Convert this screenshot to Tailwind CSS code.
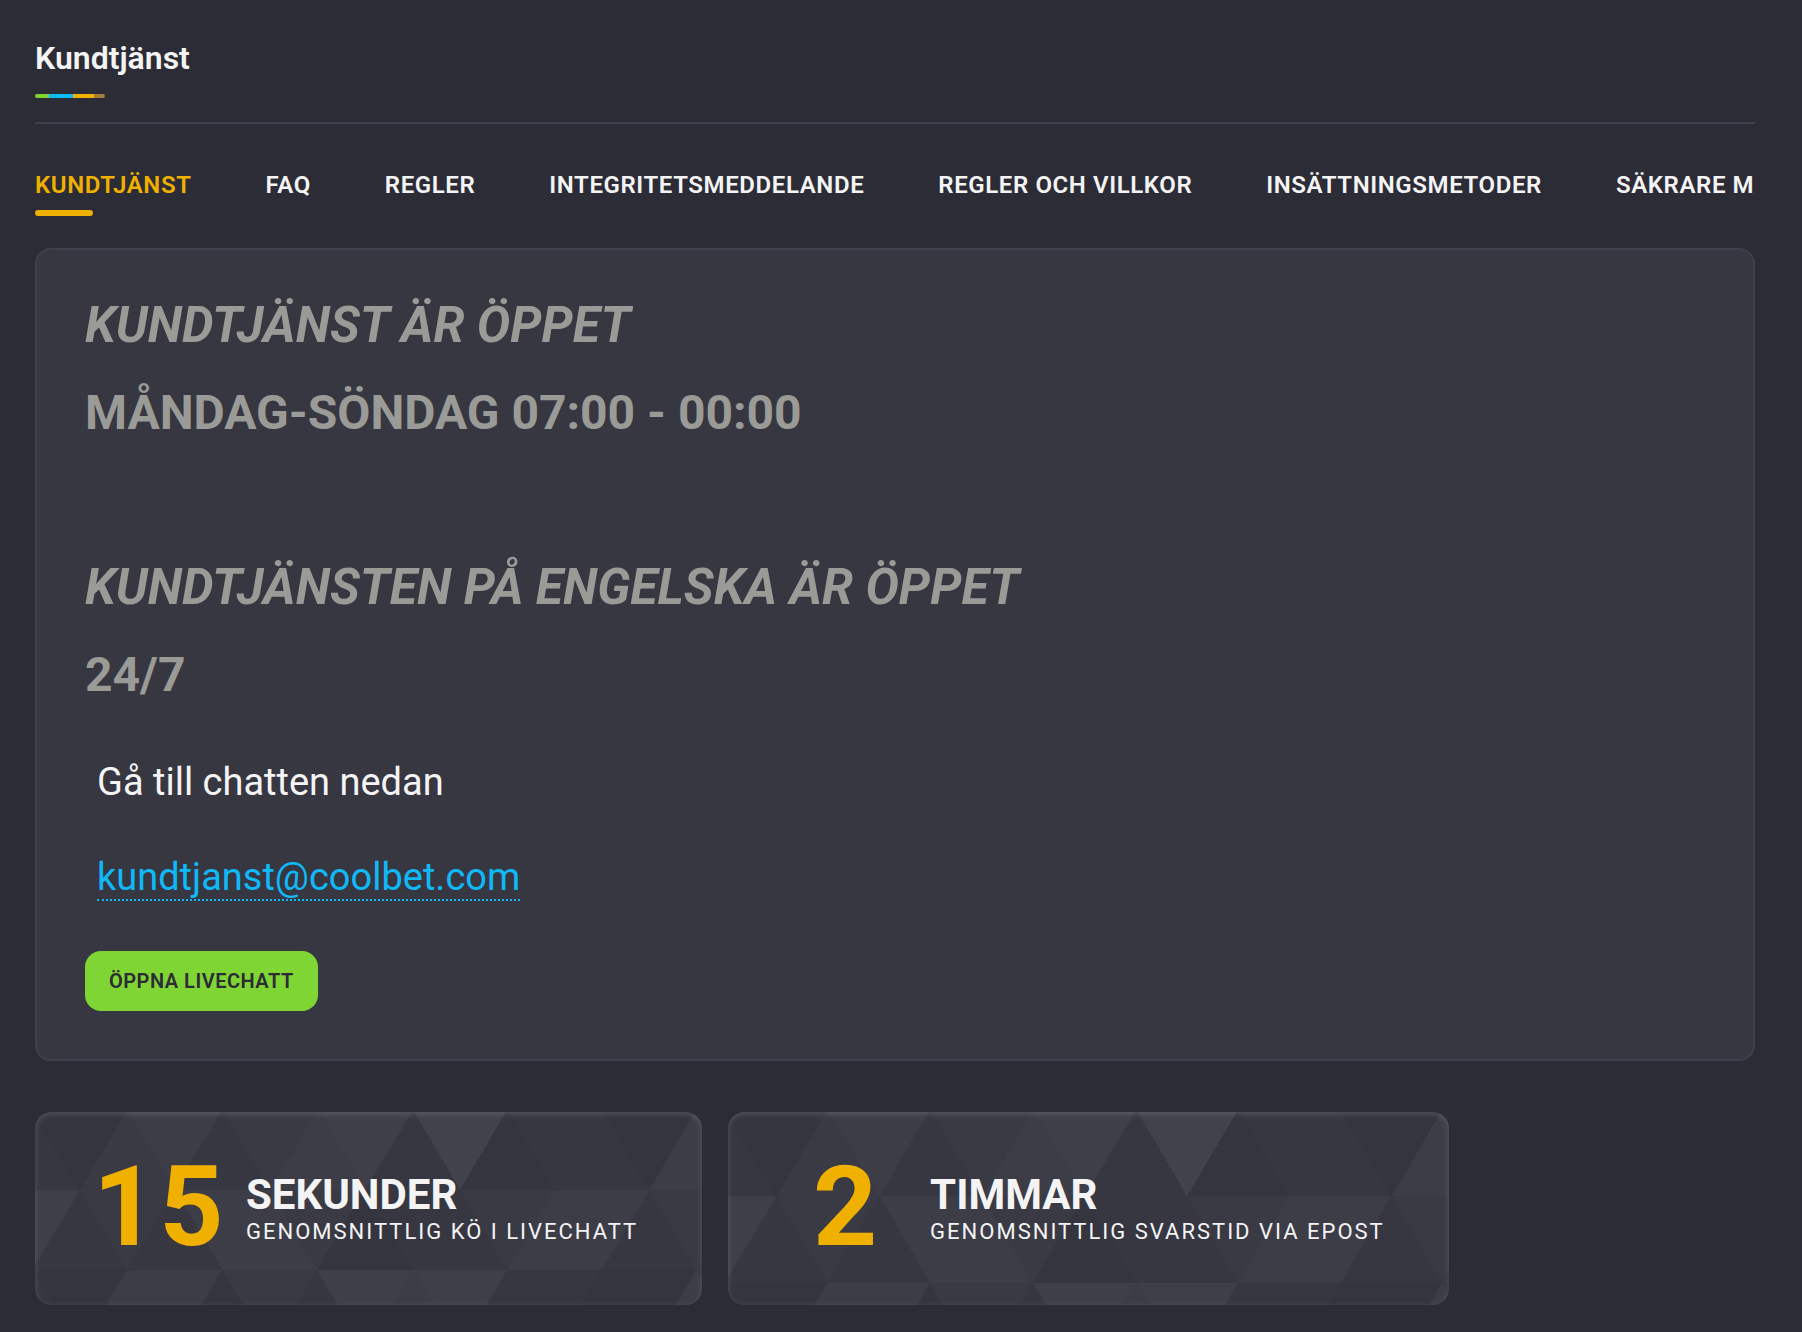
<!DOCTYPE html>
<html lang="sv">
<head>
  <meta charset="UTF-8" />
  <meta name="viewport" content="width=device-width, initial-scale=1.0" />
  <title>Kundtjänst</title>
  <script src="https://cdn.jsdelivr.net/npm/@tailwindcss/browser@4"></script>
</head>
<body class="min-h-screen bg-[#2c2c36] text-[#f4f4f5] font-['Roboto',sans-serif]">
  <div class="pl-[35px] pr-[47px] pt-9">

    <!-- Header -->
    <header class="border-b-2 border-[#40404c] pb-6">
      <h1 class="text-[32px] leading-11 font-semibold">Kundtjänst</h1>
      <div class="mt-[14px] flex h-1 w-[70px] overflow-hidden rounded-full">
        <span class="w-[14px] bg-[#7ed533]"></span>
        <span class="w-6 bg-[#0fb9f7]"></span>
        <span class="w-[21px] bg-[#f0b000]"></span>
        <span class="w-[11px] bg-[#a4803c]"></span>
      </div>
    </header>

    <!-- Tabs -->
    <nav class="mt-[45px] flex gap-[74px] overflow-hidden whitespace-nowrap text-2xl leading-8 font-semibold tracking-wide">
      <a href="#" class="text-[#f0b000]">KUNDTJÄNST<span class="mt-[9px] block h-[6px] w-[58px] rounded-full bg-[#f0b000]"></span></a>
      <a href="#">FAQ</a>
      <a href="#">REGLER</a>
      <a href="#">INTEGRITETSMEDDELANDE</a>
      <a href="#">REGLER OCH VILLKOR</a>
      <a href="#">INSÄTTNINGSMETODER</a>
      <a href="#">SÄKRARE M</a>
    </nav>

    <!-- Contact -->
    <main class="mt-8 rounded-2xl border-2 border-[#40404c] bg-[#373742] px-12 pt-8 pb-12">
      <div class="text-5xl leading-[87px] font-bold text-[#9a9b97]">
        <h2 class="text-[50px] leading-[87px] italic">KUNDTJÄNST ÄR ÖPPET</h2>
        <p>MÅNDAG-SÖNDAG 07:00 - 00:00</p>
        <h2 class="mt-[88px] text-[50px] leading-[87px] italic">KUNDTJÄNSTEN PÅ ENGELSKA ÄR ÖPPET</h2>
        <p>24/7</p>
      </div>
      <div class="mt-[17px] px-3 text-[38px] leading-[95px]">
        <p>Gå till chatten nedan</p>
        <p class="h-[95px]"><a href="mailto:kundtjanst@coolbet.com" class="border-b-2 border-dotted border-[#0fb9f7] text-[#0fb9f7]">kundtjanst@coolbet.com</a></p>
      </div>
      <button class="mt-[26px] h-[60px] rounded-2xl bg-[#7ed533] px-6 text-xl font-semibold tracking-wide text-[#2c2b36]">ÖPPNA LIVECHATT</button>
    </main>

    <!-- Waiting times -->
    <section class="mt-[51px] flex gap-[26px] pb-6">
      <div class="relative flex h-[193px] items-center overflow-hidden rounded-2xl bg-[#373742] pl-[58px] pr-16">
        <svg class="absolute inset-0 size-full" viewBox="0 0 667 193" preserveAspectRatio="xMinYMin slice" aria-hidden="true">
          <g id="triangles">
            <path fill="#353540" d="M-3-2H92L45 78ZM567-2H661L614 78ZM472-2L519 78H425ZM330 78L378 158H282ZM-3 158H92L45 238ZM187 158L235 238H140ZM567 158L614 238H519ZM567 158H661L614 238Z" />
            <path fill="#3a3a45" d="M92-2L140 78H45ZM187-2H282L235 78ZM45 78H140L92 158ZM235 78H330L282 158ZM425 78H519L472 158ZM614 78H709L661 158ZM187 158H282L235 238Z" />
            <path fill="#3d3d48" d="M92-2H187L140 78ZM282-2L330 78H235ZM661-2L709 78H614ZM140 78H235L187 158ZM235 78L282 158H187ZM519 78L567 158H472ZM519 78H614L567 158ZM92 158L140 238H45ZM92 158H187L140 238ZM378 158L425 238H330ZM661 158L709 238H614Z" />
            <path fill="#3e3f49" d="M282-2H378L330 78ZM-50 78H45L-3 158ZM282 158H378L330 238ZM378 158H472L425 238Z" />
            <path fill="#40424c" d="M378-2H472L425 78Z" />
          </g>
        </svg>
        <div class="absolute inset-0 rounded-2xl shadow-[inset_0_2px_6px_#ffffff26]"></div>
        <strong class="relative w-[153px] pb-1 text-[112px] leading-none tracking-[2px] text-[#f0b000]">15</strong>
        <div class="relative pt-1">
          <h3 class="text-[42px] leading-[42px] font-bold">SEKUNDER</h3>
          <p class="text-[22px] leading-8 tracking-[2px]">GENOMSNITTLIG KÖ I LIVECHATT</p>
        </div>
      </div>
      <div class="relative flex h-[193px] items-center overflow-hidden rounded-2xl bg-[#373742] pl-[85px] pr-16">
        <svg class="absolute inset-0 size-full" viewBox="0 0 667 193" preserveAspectRatio="xMinYMin slice" aria-hidden="true">
          <use href="#triangles" />
        </svg>
        <div class="absolute inset-0 rounded-2xl shadow-[inset_0_2px_6px_#ffffff26]"></div>
        <strong class="relative w-[117px] pb-1 text-[112px] leading-none tracking-[2px] text-[#f0b000]">2</strong>
        <div class="relative pt-1">
          <h3 class="text-[42px] leading-[42px] font-bold">TIMMAR</h3>
          <p class="text-[22px] leading-8 tracking-[2px]">GENOMSNITTLIG SVARSTID VIA EPOST</p>
        </div>
      </div>
    </section>
  </div>
</body>
</html>
